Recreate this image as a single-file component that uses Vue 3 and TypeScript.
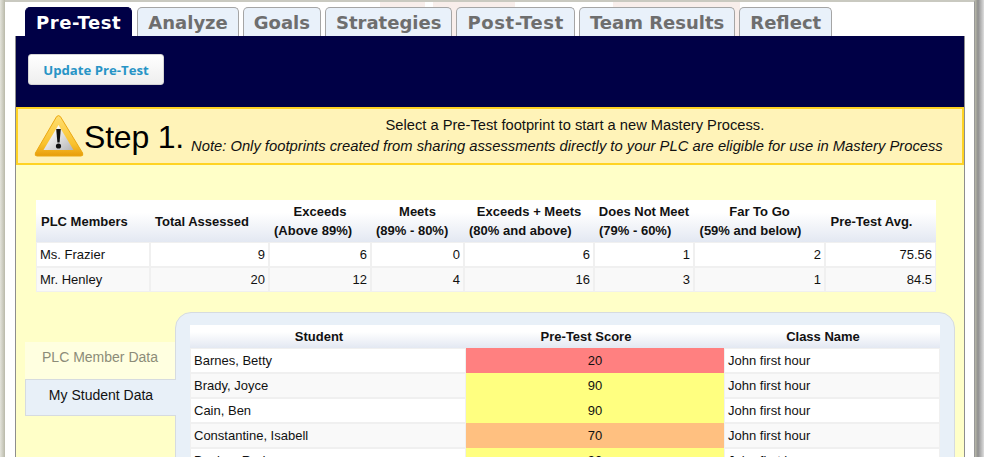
<script setup lang="ts">
const tabs = ['Pre-Test', 'Analyze', 'Goals', 'Strategies', 'Post-Test', 'Team Results', 'Reflect'];

const memberCols = [114, 119, 102, 93, 130, 100, 131, 111];
const memberHead = [
  ['PLC Members'],
  ['Total Assessed'],
  ['Exceeds', '(Above 89%)'],
  ['Meets', '(89% - 80%)'],
  ['Exceeds + Meets', '(80% and above)'],
  ['Does Not Meet', '(79% - 60%)'],
  ['Far To Go', '(59% and below)'],
  ['Pre-Test Avg.'],
];
const members = [
  ['Ms. Frazier', 9, 6, 0, 6, 1, 2, '75.56'],
  ['Mr. Henley', 20, 12, 4, 16, 3, 1, '84.5'],
];

const students = [
  { name: 'Barnes, Betty', score: 20, tone: 'red' },
  { name: 'Brady, Joyce', score: 90, tone: 'yellow' },
  { name: 'Cain, Ben', score: 90, tone: 'yellow' },
  { name: 'Constantine, Isabell', score: 70, tone: 'orange' },
  { name: 'Devine, Rod', score: 90, tone: 'yellow' },
];
</script>

<template>
  <div class="page">
    <div class="sheet">
      <ul class="tabs">
        <li
          v-for="(tab, i) in tabs"
          :key="tab"
          class="tab"
          :class="{ active: i === 0, hyphen: tab.includes('-') }"
        >{{ tab }}</li>
      </ul>

      <div class="content">
        <div class="toolbar">
          <button class="update-btn">Update Pre-Test</button>
        </div>

        <div class="step">
          <svg class="warn" width="50" height="42" viewBox="0 0 50 42">
            <defs>
              <linearGradient id="warnEdge" x1="0" y1="0" x2="0" y2="1">
                <stop offset="0" stop-color="#ffdf70" />
                <stop offset="0.7" stop-color="#f9c22e" />
                <stop offset="1" stop-color="#e79d0a" />
              </linearGradient>
              <linearGradient id="warnFace" x1="0" y1="0" x2="1" y2="1">
                <stop offset="0.2" stop-color="#ffffff" />
                <stop offset="1" stop-color="#b4b4b4" />
              </linearGradient>
            </defs>
            <path d="M22.6 1.6 Q24.5 -0.4 26.4 1.6 L48.6 38 Q49.6 41 47 41 L3 41 Q0.4 41 1.4 38 Z" fill="url(#warnEdge)" stroke="#eba813" stroke-width="1" stroke-linejoin="round" />
            <path d="M24.5 10 L39.5 35 L9.5 35 Z" fill="url(#warnFace)" />
            <path d="M22.2 14 L26.8 14 L25.6 27.5 L23.4 27.5 Z" fill="#111" />
            <circle cx="24.5" cy="31" r="2.6" fill="#111" />
          </svg>
          <span class="step-title">Step 1.</span>
          <div class="step-text">
            <div class="step-line">Select a Pre-Test footprint to start a new Mastery Process.</div>
            <div class="step-note">Note: Only footprints created from sharing assessments directly to your PLC are eligible for use in Mastery Process</div>
          </div>
        </div>

        <div class="body">
          <table class="grid members">
            <colgroup>
              <col v-for="(w, i) in memberCols" :key="i" :style="{ width: w + 'px' }" />
            </colgroup>
            <thead>
              <tr>
                <th v-for="(h, i) in memberHead" :key="i">
                  <div
                    v-for="(line, n) in h"
                    :key="line"
                    :class="h.length > 1 && n === 0 ? 'head-top' : 'head-line'"
                  >{{ line }}</div>
                </th>
              </tr>
            </thead>
            <tbody>
              <tr v-for="row in members" :key="row[0]">
                <td v-for="(cell, i) in row" :key="i" :class="{ num: i > 0 }">{{ cell }}</td>
              </tr>
            </tbody>
          </table>

          <div class="split">
            <div class="side-tabs">
              <div class="side-tab muted">PLC Member Data</div>
              <div class="side-tab current">My Student Data</div>
            </div>
            <div class="panel">
              <table class="grid students">
                <colgroup>
                  <col style="width: 276px" />
                  <col style="width: 258px" />
                  <col style="width: 216px" />
                </colgroup>
                <thead>
                  <tr>
                    <th><div class="head-line">Student</div></th>
                    <th><div class="head-line">Pre-Test Score</div></th>
                    <th><div class="head-line">Class Name</div></th>
                  </tr>
                </thead>
                <tbody>
                  <tr v-for="s in students" :key="s.name">
                    <td>{{ s.name }}</td>
                    <td class="score" :class="s.tone">{{ s.score }}</td>
                    <td>John first hour</td>
                  </tr>
                </tbody>
              </table>
            </div>
          </div>
        </div>
      </div>
    </div>
  </div>
</template>

<style>
html,
body {
  height: 457px;
  overflow: hidden;
}
</style>

<style scoped>
.page {
  width: 984px;
  height: 457px;
  overflow: hidden;
  box-sizing: border-box;
  padding-left: 5px;
  background: linear-gradient(to right, #e4e4dc, #b9b9a9 5px, #b9b9a9 975px, #8f8f8f 978px, #dedede 984px);
  font-family: "Liberation Sans", Arial, sans-serif;
  color: #111;
}

.sheet {
  width: 970px;
  height: 457px;
  box-sizing: border-box;
  padding: 5px 11px 0 10px;
  background:
    linear-gradient(to right,
      #fff 375px, #f8eeeb 375px, #f8eeeb 420px, #fff 420px,
      #fff 428px, #f8eeeb 428px, #f8eeeb 510px, #fff 510px,
      #fff 608px, #f8eeeb 608px, #f8eeeb 735px, #fff 735px) no-repeat 0 0 / 100% 34px,
    #fff;
  border-top: 2px solid #c9c9c0;
  border-right: 1px solid #999;
}

.tabs {
  display: flex;
  gap: 4px;
  margin: 0;
  padding: 0 0 0 10px;
  list-style: none;
  height: 29px;
  box-sizing: border-box;
}

.tab {
  box-sizing: border-box;
  height: 29px;
  padding: 0 10px;
  line-height: 29px;
  background: #e9f1fa;
  border: 1px solid #a5a5a5;
  border-bottom: none;
  border-radius: 5px 5px 0 0;
  font-family: "DejaVu Sans", Verdana, sans-serif;
  font-size: 18px;
  font-weight: 700;
  color: #6e6e6e;
}

.tab.hyphen {
  letter-spacing: 0.6px;
}

.tab.active {
  margin-right: 1px;
  background: #000046;
  border-color: #000046;
  color: #fff;
}

.content {
  width: 950px;
  height: 421px;
  box-sizing: border-box;
  border-left: 1px solid #8e8e8e;
  border-right: 1px solid #8e8e8e;
  background: #ffffc8;
}

.toolbar {
  height: 71px;
  box-sizing: border-box;
  padding: 18px 0 0 12px;
  background: #000046;
}

.update-btn {
  display: block;
  width: 136px;
  height: 31px;
  padding: 0;
  border: 1px solid #d4d4d4;
  border-radius: 3px;
  background: linear-gradient(to bottom, #ffffff, #eeeeee);
  font-family: "Open Sans", sans-serif;
  font-size: 13.2px;
  font-weight: 700;
  color: #2794c6;
}

.step {
  display: flex;
  align-items: center;
  height: 58px;
  box-sizing: border-box;
  padding-left: 16px;
  background: #fff3b8;
  border: 2px solid #ffd324;
}

.warn {
  flex: none;
}

.step-title {
  flex: none;
  font-size: 32px;
  line-height: 1;
  letter-spacing: -0.2px;
  color: #000;
  margin-top: 1px;
}

.step-text {
  flex: none;
  padding-left: 7px;
  text-align: center;
  color: #111;
}

.step-line {
  padding-left: 16px;
  font-size: 14.7px;
  line-height: 20px;
}

.step-note {
  font-size: 14.78px;
  line-height: 22px;
  font-style: italic;
  white-space: nowrap;
}

.body {
  padding: 35px 0 0 20px;
}

.grid {
  border-collapse: separate;
  border-spacing: 0;
  table-layout: fixed;
  font-size: 13px;
}

.grid th {
  padding: 0;
  font-weight: 700;
  text-align: center;
  white-space: nowrap;
  line-height: 19px;
  color: #111;
  background: linear-gradient(to bottom, #ffffff 30%, #e3e8f2);
}

.head-line {
  padding: 0 23px 0 5px;
}

.grid td {
  box-sizing: border-box;
  height: 25px;
  padding: 0 3px;
  background: #fff;
  border: 1px solid #f0f0f0;
}

.grid tbody tr:nth-child(even) td {
  background: #f9f9f9;
}

.members {
  width: 900px;
}

.members th {
  height: 42px;
}

.members td.num {
  text-align: right;
}

.split {
  display: flex;
  margin: 20px 0 0 -11px;
}

.side-tabs {
  flex: none;
  width: 150px;
  padding-top: 30px;
}

.side-tab {
  box-sizing: border-box;
  height: 37px;
  line-height: 30px;
  text-align: center;
  font-size: 14px;
}

.side-tab.muted {
  background: #ffffe0;
  color: #8c8c78;
}

.side-tab.current {
  position: relative;
  z-index: 1;
  width: 151px;
  background: #e8f0f8;
  border: 1px solid #d6dbe0;
  border-right: none;
  color: #111;
}

.panel {
  flex: none;
  width: 780px;
  height: 160px;
  box-sizing: border-box;
  padding: 12px 14px 0;
  background: #e8f0f8;
  border: 1px solid #d6dbe0;
  border-radius: 16px 16px 0 0;
}

.students {
  width: 750px;
}

.students th {
  height: 23px;
  line-height: 23px;
}

.score {
  text-align: center;
}

.grid tbody tr td.red {
  background: #ff8080;
  border-color: #ff8080;
}

.grid tbody tr td.yellow {
  background: #ffff80;
  border-color: #ffff80;
}

.grid tbody tr td.orange {
  background: #ffc080;
  border-color: #ffc080;
}
</style>
